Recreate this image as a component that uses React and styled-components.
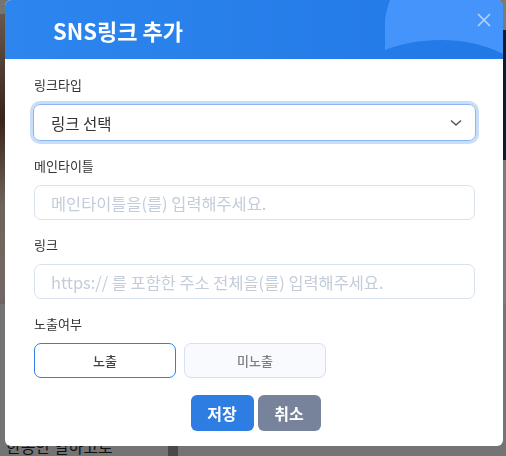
import React, { useState } from 'react'
import styled, { createGlobalStyle } from 'styled-components'

const GlobalStyle = createGlobalStyle`
    html, body {
        margin: 0;
        padding: 0;
        width: 506px;
        height: 456px;
        overflow: hidden;
        font-family: "Noto Sans CJK KR", "Noto Sans", sans-serif;
    }
`;

const Page = styled.div`
    width: 506px;
    height: 456px;
    background: #f2f2f2;
    display: grid;
    grid-template-columns: 168px 10px 1fr;
    grid-template-rows: 14px 290px 1fr;
`;

const Poster = styled.div`
    grid-column: 1;
    grid-row: 2;
    background: linear-gradient(160deg, #d9b9a0 0%, #7a4a35 30%, #e8d3c1 55%, #f2d9d2 80%, #c98f93 100%);
`;

const DarkBar = styled.div`
    grid-column: 2;
    grid-row: 3;
    background: #9a9a9a;
`;

const Side = styled.div`
    grid-column: 3;
    grid-row: 1 / span 2;
    background: linear-gradient(#ffffff 0, #ffffff 30px, #1d3a6e 30px, #1d3a6e 160px, #ffffff 160px);
`;

const BottomText = styled.div`
    grid-column: 1;
    grid-row: 3;
    display: flex;
    align-items: flex-end;
    padding: 0 0 0 6px;
    font-size: 16px;
    color: #222;
    line-height: 1.1;
    overflow: hidden;
`;

const Overlay = styled.div`
    position: fixed;
    inset: 0;
    background: rgba(0, 0, 0, 0.52);
`;

const Modal = styled.div`
    position: absolute;
    left: 5px;
    top: 0;
    width: 498px;
    height: 446px;
    background: #fff;
    border-radius: 6px;
    overflow: hidden;
    display: flex;
    flex-direction: column;
`;

const Header = styled.div`
    position: relative;
    height: 59px;
    flex-shrink: 0;
    background: linear-gradient(90deg, #2d85ee 0%, #2279e6 100%);
    display: flex;
    align-items: center;
    padding: 0 0 0 48px;
`;

const Deco = styled.svg`
    position: absolute;
    right: 0;
    top: 0;
`;

const Title = styled.h2`
    position: relative;
    margin: 0;
    font-size: 22px;
    font-weight: 700;
    color: #fff;
    letter-spacing: 0;
`;

const Close = styled.button`
    position: absolute;
    right: 10px;
    top: 13px;
    width: 16px;
    height: 16px;
    padding: 0;
    border: 0;
    background: none;
    display: flex;
`;

const Body = styled.div`
    display: flex;
    flex-direction: column;
    padding: 17px 28px 0 29px;
`;

const Field = styled.div`
    display: flex;
    flex-direction: column;
    gap: 10px;
    margin-bottom: 16px;
`;

const Label = styled.label`
    font-size: 13px;
    color: #333;
    line-height: 18px;
`;

const SelectBox = styled.div`
    height: 35px;
    margin: 0 -1px;
    border: 1px solid #8ab6f1;
    border-radius: 7px;
    box-shadow: 0 0 0 3px #c8ddf9;
    display: flex;
    align-items: center;
    justify-content: space-between;
    padding: 0 13px 0 17px;
    font-size: 15.5px;
    color: #333;
`;

const Input = styled.input`
    height: 35px;
    box-sizing: border-box;
    border: 1px solid #d9e2ee;
    border-radius: 7px;
    padding: 0 16px;
    font-family: inherit;
    font-size: 16.4px;
    color: #333;
    outline: none;
    &::placeholder {
        color: #c3ccd9;
    }
`;

const ToggleRow = styled.div`
    display: flex;
    gap: 8px;
`;

const Toggle = styled.button`
    width: 142px;
    height: 35px;
    border-radius: 7px;
    font-family: inherit;
    font-size: 13px;
    font-weight: 500;
    border: 1px solid ${({active}) => active ? '#2f7fe6' : '#d6e1ef'};
    background: ${({active}) => active ? '#fff' : '#f8fafd'};
    color: ${({active}) => active ? '#444' : '#7a7f88'};
`;

const Actions = styled.div`
    display: flex;
    justify-content: center;
    gap: 4px;
    margin-top: 1px;
    padding-left: 2px;
`;

const Action = styled.button`
    width: 63px;
    height: 36px;
    border: 0;
    border-radius: 6px;
    font-family: inherit;
    font-size: 16px;
    font-weight: 700;
    color: #fff;
    background: ${({variant}) => variant === 'cancel' ? '#76839a' : '#2e7de3'};
`;

const App = () => {
    const [shown, setShown] = useState(true);

    return (
        <>
            <GlobalStyle />
            <Page>
                <Poster />
                <Side />
                <BottomText>한동안 일하고로</BottomText>
                <DarkBar />
            </Page>
            <Overlay>
                <Modal>
                    <Header>
                        <Deco width="118" height="59" viewBox="0 0 118 59">
                            <path d="M5 0 C-1 16 -2 34 0 50 C30 38 80 34 118 54 L118 0 Z" fill="#4594fb" />
                        </Deco>
                        <Title>SNS링크 추가</Title>
                        <Close aria-label="close">
                            <svg width="14" height="14" viewBox="0 0 14 14">
                                <path d="M1 1 L13 13 M13 1 L1 13" stroke="#b4d2fa" strokeWidth="1.6" fill="none" />
                            </svg>
                        </Close>
                    </Header>
                    <Body>
                        <Field>
                            <Label>링크타입</Label>
                            <SelectBox>
                                <span>링크 선택</span>
                                <svg width="12" height="8" viewBox="0 0 12 8">
                                    <path d="M1 1.5 L6 6 L11 1.5" stroke="#555b66" strokeWidth="1.6" fill="none" />
                                </svg>
                            </SelectBox>
                        </Field>
                        <Field>
                            <Label>메인타이틀</Label>
                            <Input placeholder="메인타이틀을(를) 입력해주세요." />
                        </Field>
                        <Field>
                            <Label>링크</Label>
                            <Input placeholder="https:// 를 포함한 주소 전체을(를) 입력해주세요." />
                        </Field>
                        <Field>
                            <Label>노출여부</Label>
                            <ToggleRow>
                                <Toggle active={shown} onClick={() => setShown(true)}>노출</Toggle>
                                <Toggle active={!shown} onClick={() => setShown(false)}>미노출</Toggle>
                            </ToggleRow>
                        </Field>
                        <Actions>
                            <Action>저장</Action>
                            <Action variant="cancel">취소</Action>
                        </Actions>
                    </Body>
                </Modal>
            </Overlay>
        </>
    )
}

export default App;
